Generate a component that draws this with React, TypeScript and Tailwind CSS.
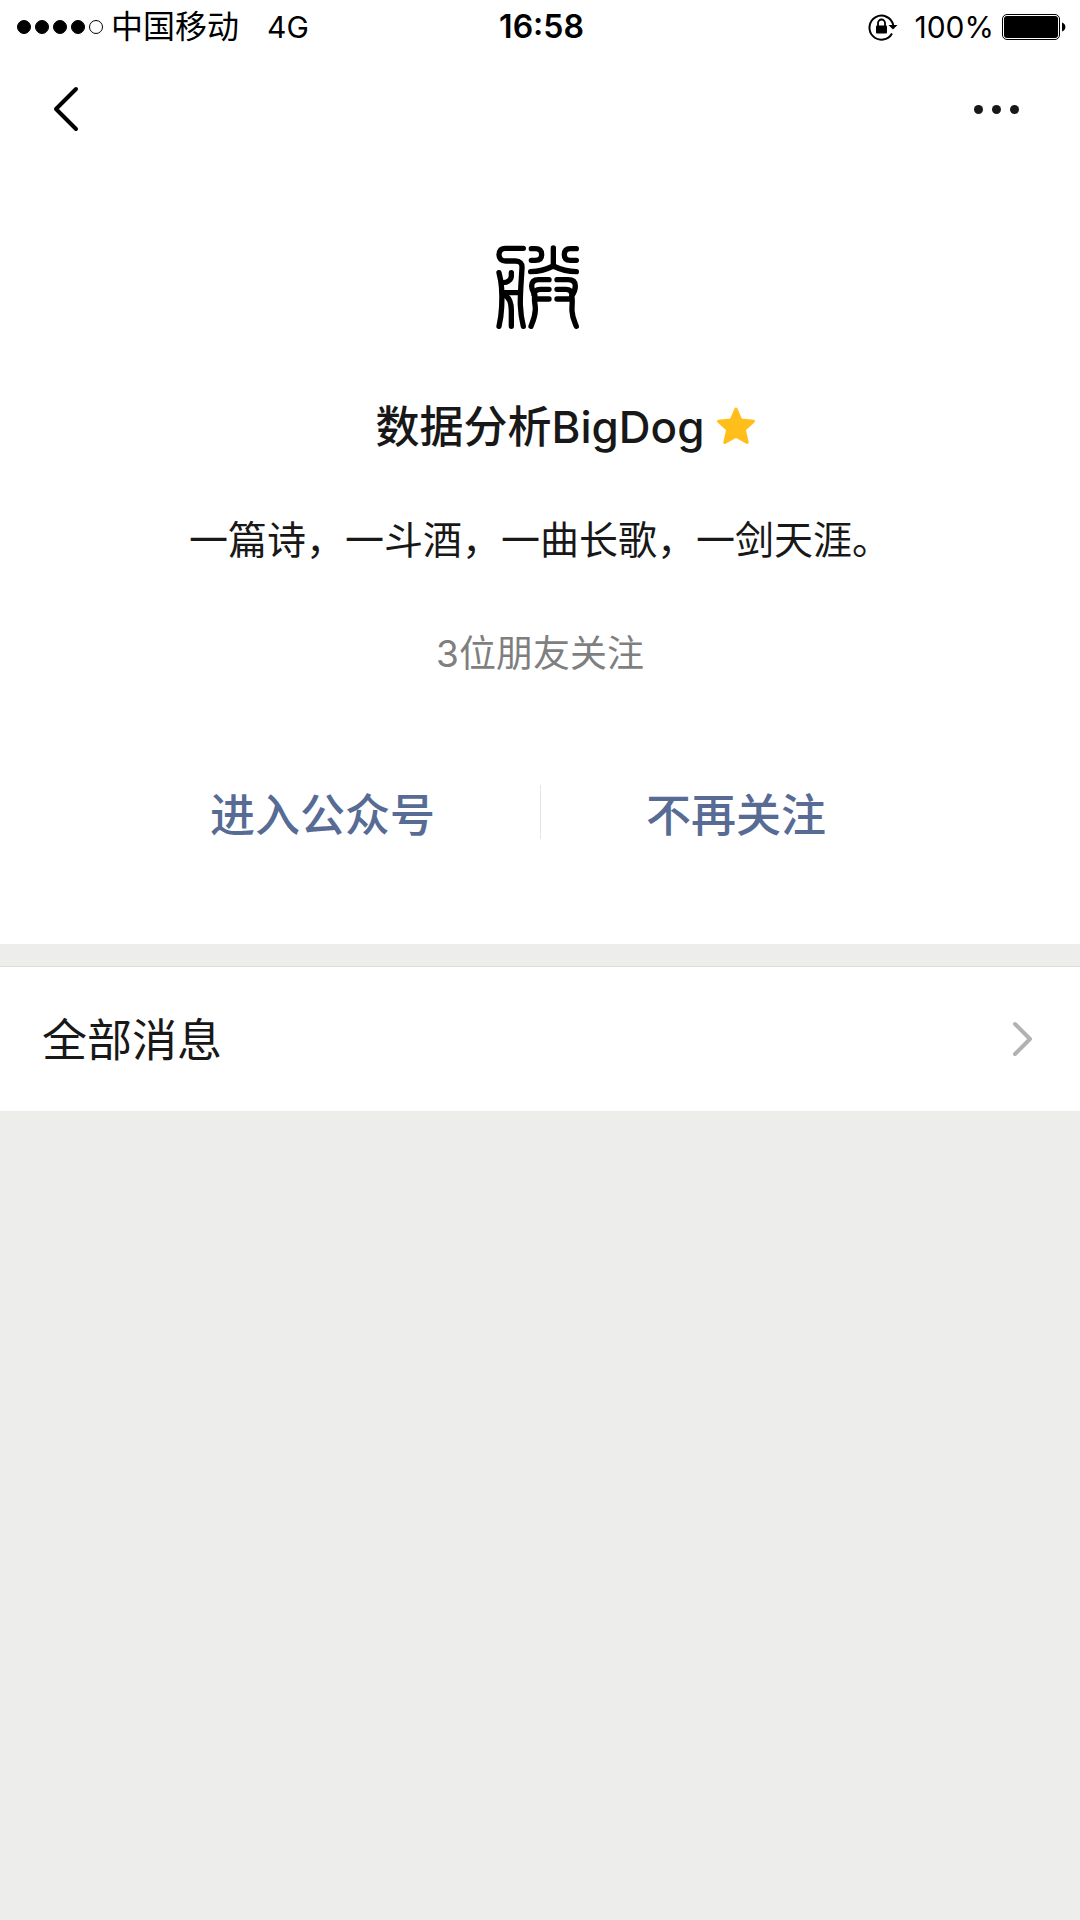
import React from 'react';


const SIGNAL = [true, true, true, true, false]


// icons
const RotationLock = () => (
    <svg width="30" height="28" viewBox="0 0 30 28" fill="none">
        <path d="M24 20.5A12 12 0 1 1 25.2 12" stroke="black" strokeWidth="2" />
        <path d="M20.5 12H29.5L25 16.5Z" fill="black" />
        <rect x="8" y="12.5" width="11" height="8" rx="1" fill="black" />
        <path d="M10 13V10a3.5 3.5 0 0 1 7 0v3" stroke="black" strokeWidth="1.8" />
    </svg>
)

const Battery = () => (
    <svg width="64" height="26" viewBox="0 0 64 26" fill="none">
        <rect x="0.5" y="0.5" width="57" height="25" rx="4.5" stroke="black" />
        <rect x="2" y="2" width="54" height="22" rx="3" fill="black" />
        <path d="M60 8.5C62.2 9.3 63.4 11 63.4 13S62.2 16.7 60 17.5Z" fill="black" />
    </svg>
)

const SealLogo = () => (
    <svg
        role="img"
        aria-label="logo"
        className="w-[84px] h-[84px] overflow-visible"
        viewBox="56 45 252 252"
        fill="none"
        stroke="black"
        strokeWidth="16"
        strokeLinecap="round"
        strokeLinejoin="round"
    >
        {/* left part */}
        <path d="M132 55H78C64 55 59 64 59 74C59 86 66 93 79 93H108C122 93 129 100 128 114C126 150 122 195 123 225C124 250 127 270 132 289" />
        <path d="M59 128C68 160 69 195 67 230C66 255 63 272 59 289" />
        <path d="M96 128V137C96 149 86 157 71 158" />
        <path d="M70 188H120" />
        <path d="M74 194C90 202 96 216 96 240V289" />
        {/* right part, top */}
        <path d="M156 56H168C181 56 187 63 187 74C187 85 181 91 168 91H156" />
        <path d="M222 54V106" />
        <path d="M291 56H273C260 56 255 63 255 74C255 85 260 91 273 91H291" />
        <path d="M154 125C180 125 200 119 222 108C244 119 264 125 291 125" />
        {/* right part, bottom */}
        <path d="M209 149H178C163 149 157 156 157 168C157 182 163 188 167 196C162 208 169 222 168 240C167 262 160 275 155 289" />
        <path d="M209 178H183C172 178 165 183 164 194" />
        <path d="M209 207H166" />
        <path d="M233 149H266C282 149 288 156 288 168C288 182 283 190 277 198C281 210 277 225 278 243C279 264 286 276 291 289" />
        <path d="M233 178H260C271 178 277 184 278 194" />
        <path d="M233 207H275" />
    </svg>
)

const Star = () => (
    <svg width="40" height="40" viewBox="0 1 38 38">
        <path
            d="M19 3L23.6 13.4L35.5 14.7L26.8 22.5L29.6 34.5L19 28.6L8.4 34.5L11.2 22.5L2.5 14.7L14.4 13.4Z"
            fill="#FFBE1A"
            stroke="#FFBE1A"
            strokeWidth="3"
            strokeLinejoin="round"
        />
    </svg>
)


// COMPONENT
const App = () => {

    return (
        <div className="min-h-screen bg-[#ededeb] text-[#181818] font-['Inter','Noto_Sans_CJK_SC',sans-serif]">

            <div className="bg-white">

                {/* status bar */}
                <div className="grid grid-cols-[1fr_auto_1fr] items-center h-[54px] pl-[17px] pr-[14px] leading-10 text-black">
                    <div className="flex items-center text-[32px]">
                        <div className="flex gap-1">
                            {
                                SIGNAL.map((on, i) =>
                                    <span
                                        key={i}
                                        className={on
                                            ? 'size-3.5 rounded-full border border-black bg-black'
                                            : 'size-3.5 rounded-full border border-black'}
                                    />
                                )
                            }
                        </div>
                        <span className="ml-2">中国移动</span>
                        <span className="ml-7 text-[30px]">4G</span>
                    </div>
                    <span className="text-[32px] font-semibold">16:58</span>
                    <div className="flex items-center justify-end text-[30px]">
                        <RotationLock />
                        <span className="ml-4 mr-2">100%</span>
                        <Battery />
                    </div>
                </div>

                {/* nav */}
                <div className="flex items-center justify-between h-[110px] px-[52px]">
                    <button type="button" aria-label="返回">
                        <svg width="28" height="46" viewBox="0 0 28 46" fill="none">
                            <path d="M24 3L4 23L24 43" stroke="black" strokeWidth="4" strokeLinecap="round" strokeLinejoin="round" />
                        </svg>
                    </button>
                    <button type="button" aria-label="更多" className="flex gap-[9px] px-[9px]">
                        <span className="size-[9px] rounded-full bg-[#181818]" />
                        <span className="size-[9px] rounded-full bg-[#181818]" />
                        <span className="size-[9px] rounded-full bg-[#181818]" />
                    </button>
                </div>

                {/* profile */}
                <div className="flex flex-col items-center pt-[81px] pb-[105px]">
                    <SealLogo />
                    <div className="grid grid-cols-[1fr_auto_1fr] items-center gap-3 w-full mt-[68px]">
                        <h1 className="col-start-2 text-[44px] leading-[60px] font-medium">数据分析BigDog</h1>
                        <Star />
                    </div>
                    <p className="mt-[53px] text-[39px] leading-[60px]">一篇诗，一斗酒，一曲长歌，一剑天涯。</p>
                    <p className="mt-[54px] text-[37px] leading-[60px] text-[#7f7f7f]">3位朋友关注</p>

                    <div className="grid grid-cols-2 w-full mt-[101px] text-[45px] leading-[46px] font-medium text-[#576b95]">
                        <button type="button" className="pt-2 pr-[105px] text-right">进入公众号</button>
                        <button type="button" className="pt-2 pl-[105px] text-left border-l border-[#e5e5e5]">不再关注</button>
                    </div>
                </div>
            </div>

            {/* messages */}
            <a href="#messages" className="flex items-center justify-between h-[145px] mt-[22px] pl-[42px] pr-[46px] bg-white border-t border-[#dededd]">
                <span className="pt-1 text-[45px] leading-[60px]">全部消息</span>
                <svg width="22" height="36" viewBox="0 0 22 36" fill="none">
                    <path d="M3 3L18 18L3 33" stroke="#b2b2b2" strokeWidth="4" strokeLinecap="round" strokeLinejoin="round" />
                </svg>
            </a>
        </div>
    );
};

export default App;
